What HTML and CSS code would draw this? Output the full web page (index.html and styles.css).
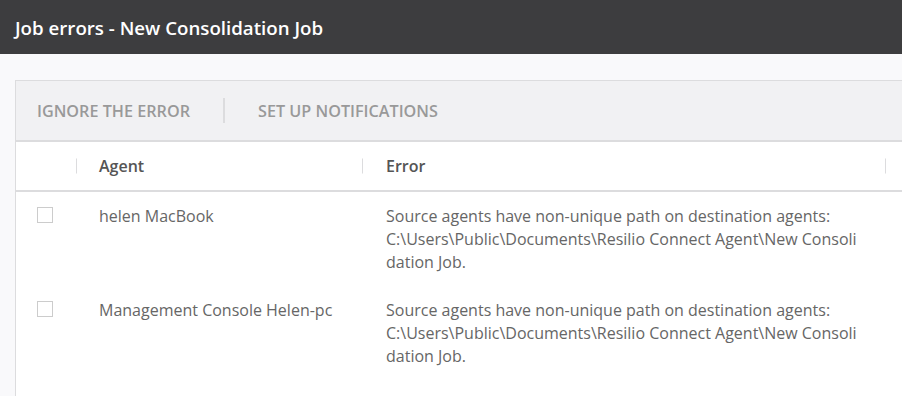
FILE: index.html
```html
<!DOCTYPE html>
<html lang="en">

<head>
    <meta charset="UTF-8">
    <meta name="viewport" content="width=device-width, initial-scale=1.0">
    <title>Job errors</title>
    <link rel="stylesheet" href="styles.css">
</head>

<body>
    <header class="dialog-header">
        <h1 class="dialog-title">Job errors - New Consolidation Job</h1>
    </header>

    <main class="dialog-body">
        <section class="errors-panel">
            <!-- actions -->
            <div class="toolbar">
                <button class="toolbar-btn">Ignore the error</button>
                <span class="toolbar-sep"></span>
                <button class="toolbar-btn">Set up notifications</button>
            </div>

            <div class="errors-table">
                <div class="row head-row">
                    <div class="cell cell-check"></div>
                    <div class="cell cell-agent">Agent</div>
                    <div class="cell cell-error">Error</div>
                    <div class="cell cell-tail"></div>
                </div>

                <div class="row">
                    <div class="cell cell-check"><span class="checkbox"></span></div>
                    <div class="cell cell-agent">helen MacBook</div>
                    <div class="cell cell-error">Source agents have non-unique path on destination agents:
                        <span class="error-path">C:\Users\Public\Documents\Resilio Connect Agent\New Consolidation Job.</span>
                    </div>
                    <div class="cell cell-tail"></div>
                </div>

                <div class="row">
                    <div class="cell cell-check"><span class="checkbox"></span></div>
                    <div class="cell cell-agent">Management Console Helen-pc</div>
                    <div class="cell cell-error">Source agents have non-unique path on destination agents:
                        <span class="error-path">C:\Users\Public\Documents\Resilio Connect Agent\New Consolidation Job.</span>
                    </div>
                    <div class="cell cell-tail"></div>
                </div>
            </div>
        </section>
    </main>
</body>

</html>
```

FILE: styles.css
```css
body {
    margin: 0;
    height: 100vh;
    overflow: hidden;
    display: flex;
    flex-direction: column;
    background-color: #f9f9fb;
    font-family: "Open Sans", "Liberation Sans", sans-serif;
    color: #555;
}

.dialog-header {
    height: 54px;
    flex: none;
    background-color: #3d3d3f;
    display: flex;
    align-items: center;
    padding: 0 15px;
}

.dialog-title {
    margin: 0;
    font-size: 18.7px;
    font-weight: 600;
    color: #fff;
}

.dialog-body {
    flex: 1;
    display: flex;
    padding: 26px 0 0 15px;
    min-height: 0;
}

.errors-panel {
    flex: 1;
    border: 1px solid #dcdcde;
    border-right: none;
    border-bottom: none;
    background-color: #fff;
}

.toolbar {
    height: 59px;
    display: flex;
    align-items: center;
    padding: 0 21px;
    background-color: #f1f1f3;
    border-bottom: 2px solid #dcdcde;
}

.toolbar-btn {
    border: none;
    background: none;
    padding: 0;
    font-family: inherit;
    font-size: 16.2px;
    font-weight: 600;
    text-transform: uppercase;
    color: #999;
    cursor: pointer;
}

.toolbar-sep {
    width: 2px;
    height: 25px;
    margin: 0 33px;
    background-color: #dcdcde;
}

.row {
    display: flex;
    font-size: 16px;
    line-height: 23px;
}

.head-row {
    height: 48px;
    align-items: center;
    border-bottom: 2px solid #dcdcde;
    font-weight: 600;
}

.cell-check {
    width: 60px;
    flex: none;
    position: relative;
}

.cell-agent {
    width: 286px;
    flex: none;
    padding-left: 23px;
    box-sizing: border-box;
    position: relative;
}

.cell-error {
    width: 523px;
    flex: none;
    padding: 0 20px 0 24px;
    box-sizing: border-box;
    position: relative;
}

.error-path {
    display: block;
    word-break: break-all;
}

.cell-tail {
    flex: 1;
    position: relative;
}

/* column separators in the head row */
.head-row .cell-agent::before,
.head-row .cell-error::before,
.head-row .cell-tail::before {
    content: '';
    position: absolute;
    left: 0;
    top: 50%;
    width: 1px;
    height: 15px;
    transform: translateY(-50%);
    background-color: #dcdcde;
}

.row:not(.head-row) {
    padding: 13px 0 12px;
    color: #666;
}

.row:not(.head-row) .cell-check {
    padding: 2px 0 0 21px;
    box-sizing: border-box;
}

.checkbox {
    display: block;
    width: 14px;
    height: 14px;
    border: 1px solid #ccc;
    background-color: #fff;
}
```
